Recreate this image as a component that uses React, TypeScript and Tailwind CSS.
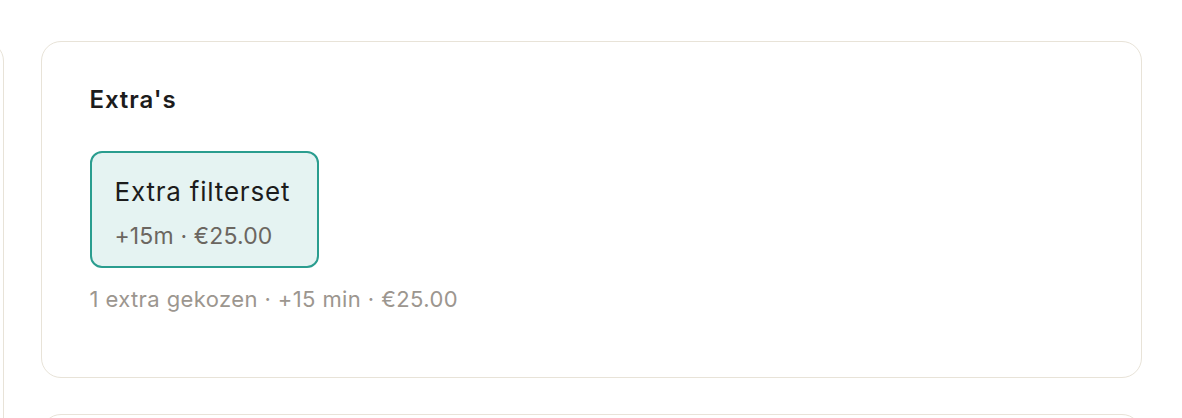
import React from "react";

export default function App() {
  return (
    <div
      className="flex h-[418px] w-[1182px] gap-[37px] overflow-hidden bg-white pt-[41px]"
      style={{ fontFamily: "Inter, 'Noto Sans', sans-serif" }}
    >
      <div className="-ml-[300px] h-[600px] w-[303.5px] shrink-0 rounded-[20px] border-[1.5px] border-[#e8e3d8] bg-white" />
      <div className="flex w-[1101px] shrink-0 flex-col gap-[36px]">
        <section className="h-[337px] shrink-0 rounded-[20px] border-[1.5px] border-[#e8e3d8] bg-white pl-[48px] pt-[41.5px]">
          <h2 className="text-[24px] font-semibold leading-[32px] tracking-[0.9px] text-[#1c1c1c]">Extra's</h2>
          <div className="mt-[35px] flex">
            <button className="flex h-[117px] w-[229px] flex-col items-start rounded-[12px] border-2 border-[#2a9d8f] bg-[#e5f3f2] pl-[23px] pt-[22px] text-left">
              <span className="text-[26px] leading-[34px] tracking-[0.8px] text-[#1c1c1c]">Extra filterset</span>
              <span className="mt-[12px] text-[23px] leading-[30px] tracking-[0.15px] text-[#6b6660]">+15m · €25.00</span>
            </button>
          </div>
          <p className="mt-[16px] text-[22px] leading-[30px] tracking-[0.4px] text-[#9c968f]">
            1 extra gekozen · +15 min · €25.00
          </p>
        </section>
        <section className="h-[300px] shrink-0 rounded-[20px] border-[1.5px] border-[#e8e3d8] bg-white" />
      </div>
    </div>
  );
}
